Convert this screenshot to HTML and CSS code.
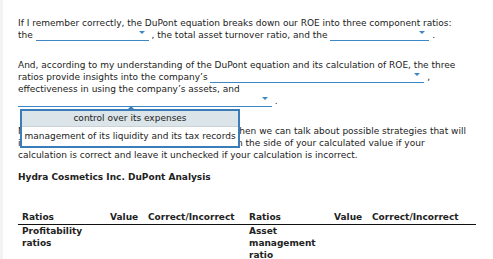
FILE: index.html
```html
<!DOCTYPE html>
<html lang="en">
<head>
    <meta charset="UTF-8">
    <title>DuPont Analysis</title>
    <link rel="stylesheet" href="styles.css">
</head>
<body>
    <div id="page">
        <p class="para">
            If I remember correctly, the DuPont equation breaks down our ROE into three component ratios:<br>
            the <span class="pick pick-a"></span> , the total asset turnover ratio, and the <span class="pick pick-b"></span> .
        </p>
        <p class="para">
            And, according to my understanding of the DuPont equation and its calculation of ROE, the three<br>
            ratios provide insights into the company’s <span class="pick pick-c"></span> ,<br>
            effectiveness in using the company’s assets, and<br>
            <span class="pick pick-d"><span class="menu"><span class="menuItem selected">control over its expenses</span><span class="menuItem tall">management of its liquidity and its tax records</span></span></span> .
        </p>
        <p class="para">
            Now that we have finished the DuPont analysis, then we can talk about possible strategies that will<br>
            improve Hydra’s ROE. Place a checkmark right on the side of your calculated value if your<br>
            calculation is correct and leave it unchecked if your calculation is incorrect.
        </p>
        <h4 class="title">Hydra Cosmetics Inc. DuPont Analysis</h4>

        <table class="grid">
            <tr>
                <th class="colName">Ratios</th>
                <th class="colVal">Value</th>
                <th class="colCheck">Correct/Incorrect</th>
                <th class="colName2">Ratios</th>
                <th class="colVal">Value</th>
                <th class="colCheck last">Correct/Incorrect</th>
            </tr>
            <tr>
                <td>Profitability ratios</td>
                <td></td>
                <td></td>
                <td>Asset management ratio</td>
                <td></td>
                <td></td>
            </tr>
        </table>
    </div>
</body>
</html>
```

FILE: styles.css
```css
html, body {
    margin: 0;
    padding: 0;
}
body {
    background-color: #fff;
    font-family: "DejaVu Sans", Verdana, sans-serif;
    font-size: 9px;
    color: #222;
}

#page {
    min-height: 259px;
    box-sizing: border-box;
    border-left: 3px solid #f3f3f3;
    padding: 17px 0 0 15px;
}

.para {
    margin: 0 0 18px 0;
    line-height: 12px;
    white-space: nowrap;
}

/* dropdown blanks */
.pick {
    display: inline-block;
    position: relative;
    height: 10px;
    border-bottom: 1px solid #3d87c4;
    vertical-align: -3px;
}
.pick:after {
    content: "";
    position: absolute;
    right: 4px;
    top: 1px;
    border-left: 3px solid transparent;
    border-right: 3px solid transparent;
    border-top: 3px solid #3d87c4;
}
.pick-a { width: 113px; }
.pick-b { width: 99px; }
.pick-c { width: 214px; }
.pick-d { width: 254px; }

.menu {
    position: absolute;
    left: 2px;
    top: 13px;
    width: 216px;
    border: 2px solid #3a7db8;
    background: #fff;
    z-index: 2;
}
.menu:before {
    content: "";
    position: absolute;
    left: 106px;
    top: -5px;
    border-left: 3px solid transparent;
    border-right: 3px solid transparent;
    border-bottom: 3px solid #3a7db8;
}
.menuItem {
    display: block;
    text-align: center;
    height: 15px;
    line-height: 15px;
    white-space: nowrap;
}
.menuItem.selected {
    background-color: #dbe4e8;
    border-bottom: 1px solid #c9d3d8;
}
.menuItem.tall {
    height: 19px;
    line-height: 18px;
}

.title {
    margin: -8px 0 28px 0;
    font-size: 9px;
    font-weight: bold;
    line-height: 12px;
}

.grid {
    border-collapse: collapse;
    font-weight: bold;
    font-size: 9px;
}
.grid th {
    text-align: left;
    padding: 0 4px 1px 4px;
    border-bottom: 1px solid #111;
    line-height: 12px;
}
.grid td {
    vertical-align: top;
    padding: 0 4px;
    line-height: 12px;
}
.colName { width: 80px; }
.colName2 { width: 77px; }
.colVal { width: 30px; }
.colCheck { width: 93px; }
.colCheck.last { width: 100px; }
```
